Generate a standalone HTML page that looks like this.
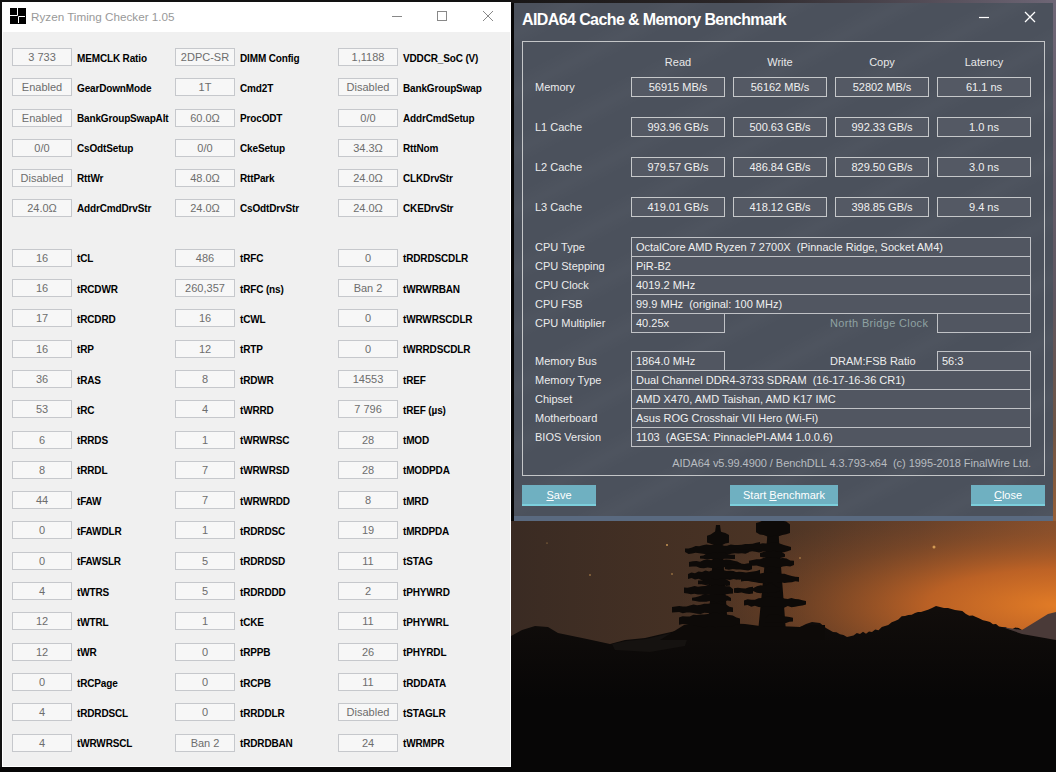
<!DOCTYPE html>
<html><head><meta charset="utf-8">
<style>
*{margin:0;padding:0;box-sizing:border-box}
html,body{width:1056px;height:772px;overflow:hidden;background:#070606;font-family:"Liberation Sans",sans-serif;position:relative}
.abs{position:absolute}
#desk{position:absolute;left:511px;top:0;width:545px;height:772px;overflow:hidden;background:#0a0808}
#rtc{position:absolute;left:0;top:0;width:511px;height:767px;background:#121212}
#rtcw{position:absolute;left:2px;top:2px;width:509px;height:765px;background:#fff}
#rtcb{position:absolute;left:3px;top:32px;width:507px;height:734px;background:#f0f0f0}
.tb{position:absolute;width:60px;height:18px;border:1px solid #c6c8cc;background:#f7f7f7;color:#6d6d6d;font-size:11px;line-height:16px;text-align:center;white-space:pre}
.lb{position:absolute;height:18px;color:#000;font-size:10px;letter-spacing:-0.15px;font-weight:bold;line-height:19px;white-space:pre}
#rtitle{position:absolute;left:31px;top:10px;font-size:11.7px;color:#999;white-space:pre}
#aida{position:absolute;left:514px;top:3px;width:539px;height:518px;background:#4b515c;overflow:hidden}
#aida .streak{position:absolute;left:-200px;top:-200px;width:1000px;height:1000px;background:repeating-linear-gradient(-28deg,rgba(255,255,255,0) 0px,rgba(255,255,255,0.02) 14px,rgba(255,255,255,0) 30px,rgba(255,255,255,0) 52px)}
#aida .strip{position:absolute;left:0;top:513px;width:539px;height:5px;background:#5a6a80}
#atitle{position:absolute;left:522px;top:11px;letter-spacing:-0.6px;font-size:16px;font-weight:bold;color:#fff;white-space:pre}
#panel{position:absolute;left:522px;top:41px;width:523px;height:435px;border:1px solid #c4c6c8}
.hd{position:absolute;width:94px;text-align:center;color:#e8e8e8;font-size:11px;white-space:pre}
.al{position:absolute;color:#ececec;font-size:11px;line-height:21px;white-space:pre}
.al.nb{color:#8fa2a2;letter-spacing:0.33px}
.vb{position:absolute;width:94px;height:20px;border:1px solid #c6c8ca;background:#545964;color:#f0f0f0;font-size:11px;line-height:19px;text-align:center;white-space:pre}
.ib{position:absolute;height:20px;border:1px solid #c0c2c6;background:#515661;color:#f0f0f0;font-size:11px;line-height:19px;padding-left:4px;white-space:pre}
.btn{position:absolute;top:485px;height:21px;background:#6fb0c1;border-bottom:2px solid #7ccfdc;color:#fff;font-size:11px;line-height:20px;text-align:center;white-space:pre}
.btn u{text-decoration:underline}
#foot{position:absolute;right:25px;top:457px;color:#b8bcc0;font-size:11px;letter-spacing:-0.05px;white-space:pre}
</style></head><body>
<div id="desk">
<svg width="545" height="772" viewBox="511 0 545 772" style="position:absolute;left:0;top:0">
<defs>
<linearGradient id="skyH" x1="511" y1="0" x2="1056" y2="0" gradientUnits="userSpaceOnUse">
<stop offset="0" stop-color="#3a2b23"/><stop offset="0.45" stop-color="#4a3324"/><stop offset="0.75" stop-color="#64402a"/><stop offset="1" stop-color="#86502e"/>
</linearGradient>
<radialGradient id="glow" cx="1060" cy="605" r="380" gradientUnits="userSpaceOnUse" gradientTransform="translate(1060 605) scale(1 0.27) translate(-1060 -605)">
<stop offset="0" stop-color="#e27c26" stop-opacity="1"/><stop offset="0.35" stop-color="#c86624" stop-opacity="0.85"/><stop offset="0.7" stop-color="#9a5224" stop-opacity="0.35"/><stop offset="1" stop-color="#7a4426" stop-opacity="0"/>
</radialGradient>
</defs>
<linearGradient id="gnd" x1="0" y1="610" x2="0" y2="700" gradientUnits="userSpaceOnUse"><stop offset="0" stop-color="#110d0b"/><stop offset="1" stop-color="#070606"/></linearGradient>
<rect x="511" y="0" width="545" height="772" fill="#070606"/>
<linearGradient id="rstrip" x1="0" y1="0" x2="0" y2="540" gradientUnits="userSpaceOnUse"><stop offset="0" stop-color="#6e6676"/><stop offset="0.55" stop-color="#5e5660"/><stop offset="0.8" stop-color="#6e5444"/><stop offset="1" stop-color="#a06234"/></linearGradient>
<linearGradient id="tstrip" x1="511" y1="0" x2="1056" y2="0" gradientUnits="userSpaceOnUse"><stop offset="0" stop-color="#181616"/><stop offset="0.4" stop-color="#2a2628"/><stop offset="1" stop-color="#6e6676"/></linearGradient>
<rect x="511" y="0" width="545" height="3" fill="url(#tstrip)"/>
<rect x="1053" y="0" width="3" height="540" fill="url(#rstrip)"/>
<rect x="511" y="521" width="545" height="134" fill="url(#skyH)"/>
<rect x="511" y="521" width="545" height="134" fill="url(#glow)"/>
<path d="M511.0 636.0L522.0 630.0L535.0 626.0L548.0 627.0L558.0 633.0L587.0 639.0L610.0 644.0L625.0 640.0L645.0 638.0L662.0 634.0L680.0 630.0L700.0 628.0L760.0 626.0L800.0 627.0L806.0 624.0L812.0 622.0L820.0 623.0L826.0 628.0L833.0 632.0L836.5 632.2L840.0 634.3L843.5 635.1L847.0 637.0L850.2 636.3L853.5 635.6L856.8 633.1L860.0 634.0L863.0 631.7L866.0 633.7L869.0 631.5L872.0 632.0L875.2 629.4L878.5 630.2L881.8 627.1L885.0 626.0L888.3 625.0L891.7 622.3L895.0 621.0L898.3 619.5L901.7 616.3L905.0 616.0L908.3 615.1L911.7 614.8L915.0 613.0L918.0 612.1L921.0 612.1L924.0 611.0L928.0 609.7L932.0 608.0L936.0 605.9L940.0 607.0L944.0 608.0L948.0 608.0L951.5 609.0L955.0 610.0L958.7 610.4L962.3 611.0L966.0 614.0L969.3 615.8L972.7 615.6L976.0 617.0L979.5 618.6L983.0 620.3L986.5 621.1L990.0 622.0L993.0 624.2L996.0 623.9L999.0 626.4L1002.0 627.0L1005.3 627.0L1008.7 629.0L1012.0 629.3L1015.3 627.5L1018.7 628.1L1022.0 630.0L1025.1 629.5L1028.2 632.4L1031.3 631.4L1034.4 632.6L1037.5 632.3L1040.5 633.5L1043.6 633.8L1046.7 634.3L1049.8 635.7L1052.9 636.3L1056.0 637.0V772H511Z" fill="url(#gnd)"/>
<path d="M1002 627L1022 630L1035 622L1048 614L1056 612V640L1022 634Z" fill="#4a3a38"/>
<path d="M612 644L626 641L646 639L663 635L680 631L690 630L685 646L650 652L615 650Z" fill="#151210"/>
<g fill="#0d0a08">
<path d="M716 525L720 525L722 540L728 630H708L714 540Z"/>
<path d="M768 521L778 521L779 540L786 632H758L767 540Z"/>
<path d="M684 625L700 622L745 624L760 626L800 627L807 625L825 625L825 640L660 640Z"/>
<path d="M707.0 535.7L710.7 534.4L714.3 531.9L718.0 530.2L721.7 532.1L725.3 532.9L729.0 535.0L729.0 542.8L725.3 543.4L721.7 545.3L718.0 545.3L714.3 545.0L710.7 543.7L707.0 542.4Z"/>
<path d="M685.0 548.6L688.6 548.5L692.1 547.4L695.7 546.0L699.2 546.2L702.8 545.2L706.3 544.5L709.9 544.9L713.4 544.7L717.0 544.5L720.6 544.5L724.1 545.8L727.7 545.8L731.2 545.3L734.8 545.7L738.3 547.0L741.9 547.7L745.4 548.5L749.0 547.3L749.0 552.3L745.4 553.8L741.9 553.3L738.3 553.6L734.8 553.2L731.2 553.7L727.7 554.8L724.1 555.4L720.6 554.2L717.0 554.9L713.4 554.8L709.9 555.1L706.3 554.3L702.8 553.7L699.2 553.2L695.7 552.8L692.1 553.6L688.6 554.0L685.0 552.0Z"/>
<path d="M700.0 556.1L703.5 555.5L707.0 553.2L710.5 553.8L714.0 552.1L717.5 553.2L721.0 552.0L724.5 552.5L728.0 554.4L731.5 554.7L735.0 554.8L735.0 559.0L731.5 558.9L728.0 558.7L724.5 558.7L721.0 559.2L717.5 560.1L714.0 559.3L710.5 559.1L707.0 559.5L703.5 558.8L700.0 558.6Z"/>
<path d="M689.0 561.9L692.7 561.3L696.4 560.9L700.1 561.8L703.9 560.1L707.6 559.5L711.3 560.3L715.0 558.6L718.7 558.7L722.4 560.0L726.1 559.6L729.9 559.8L733.6 560.7L737.3 561.6L741.0 563.4L741.0 566.4L737.3 566.8L733.6 567.4L729.9 567.6L726.1 566.9L722.4 567.5L718.7 567.4L715.0 568.8L711.3 568.1L707.6 567.5L703.9 568.2L700.1 567.9L696.4 566.6L692.7 566.6L689.0 566.7Z"/>
<path d="M688.0 573.9L691.5 572.6L695.0 573.3L698.5 571.6L702.0 572.0L705.5 570.5L709.0 571.4L712.5 570.2L716.0 569.2L719.5 569.6L723.0 569.9L726.5 570.9L730.0 570.7L733.5 571.0L737.0 572.5L740.5 573.2L744.0 574.5L744.0 577.8L740.5 578.3L737.0 579.7L733.5 578.9L730.0 580.1L726.5 579.5L723.0 580.6L719.5 580.5L716.0 580.9L712.5 579.3L709.0 580.1L705.5 580.6L702.0 580.3L698.5 578.7L695.0 579.5L691.5 578.0L688.0 578.9Z"/>
<path d="M698.0 580.5L701.6 580.6L705.1 579.5L708.7 579.6L712.2 578.7L715.8 579.4L719.3 578.9L722.9 578.7L726.4 579.4L730.0 581.7L730.0 585.5L726.4 585.9L722.9 584.7L719.3 585.8L715.8 585.9L712.2 586.3L708.7 584.8L705.1 585.0L701.6 584.2L698.0 584.2Z"/>
<path d="M684.0 587.4L687.5 587.7L691.0 586.9L694.5 586.0L698.0 586.7L701.5 586.3L705.0 586.0L708.5 584.8L712.0 585.5L715.5 584.4L719.0 585.2L722.5 585.4L726.0 586.2L729.5 586.3L733.0 589.1L733.0 593.5L729.5 593.7L726.0 594.2L722.5 594.2L719.0 594.7L715.5 595.1L712.0 595.2L708.5 594.8L705.0 595.0L701.5 594.5L698.0 594.6L694.5 593.7L691.0 594.3L687.5 593.5L684.0 593.0Z"/>
<path d="M692.0 597.8L695.5 597.3L699.1 596.2L702.6 595.1L706.2 594.6L709.7 595.0L713.3 595.1L716.8 594.6L720.4 594.3L723.9 595.1L727.5 595.8L731.0 598.1L731.0 600.9L727.5 600.5L723.9 601.8L720.4 600.8L716.8 602.4L713.3 601.6L709.7 601.1L706.2 601.7L702.6 601.8L699.1 601.7L695.5 601.0L692.0 600.4Z"/>
<path d="M672.0 607.1L675.6 606.5L679.2 605.9L682.8 606.6L686.4 606.4L689.9 605.5L693.5 604.4L697.1 605.3L700.7 604.8L704.3 603.8L707.9 603.8L711.5 603.2L715.1 603.8L718.6 603.2L722.2 605.0L725.8 604.2L729.4 606.7L733.0 607.6L733.0 611.9L729.4 611.7L725.8 612.2L722.2 613.4L718.6 614.2L715.1 613.6L711.5 613.4L707.9 613.1L704.3 612.8L700.7 614.1L697.1 613.8L693.5 613.0L689.9 612.5L686.4 612.5L682.8 613.2L679.2 612.1L675.6 612.3L672.0 612.5Z"/>
<path d="M679.0 617.4L682.6 616.2L686.2 616.4L689.8 616.5L693.4 614.7L696.9 615.1L700.5 614.6L704.1 614.5L707.7 613.9L711.3 613.2L714.9 612.0L718.5 613.2L722.1 612.8L725.6 614.3L729.2 614.9L732.8 615.4L736.4 617.4L740.0 618.5L740.0 624.7L736.4 624.3L732.8 626.2L729.2 626.8L725.6 626.8L722.1 626.8L718.5 626.7L714.9 627.2L711.3 626.6L707.7 626.4L704.1 627.6L700.5 626.8L696.9 626.1L693.4 625.1L689.8 625.0L686.2 624.3L682.6 624.1L679.0 624.8Z"/>
<path d="M756.0 523.1L759.8 522.0L763.6 519.9L767.3 519.4L771.1 518.5L774.9 518.3L778.7 519.5L782.4 520.7L786.2 521.5L790.0 524.6L790.0 533.1L786.2 534.3L782.4 535.1L778.7 536.2L774.9 535.7L771.1 536.3L767.3 536.4L763.6 535.1L759.8 534.5L756.0 532.2Z"/>
<path d="M745.0 546.3L748.5 545.2L752.1 545.6L755.6 543.6L759.2 543.9L762.7 543.3L766.2 543.5L769.8 543.1L773.3 542.2L776.8 542.4L780.4 543.7L783.9 545.1L787.5 546.1L791.0 547.0L791.0 550.0L787.5 551.3L783.9 552.2L780.4 552.6L776.8 551.8L773.3 553.1L769.8 552.0L766.2 551.7L762.7 551.5L759.2 552.6L755.6 551.8L752.1 551.3L748.5 551.9L745.0 551.3Z"/>
<path d="M760.0 552.9L763.6 551.9L767.1 551.5L770.7 551.2L774.3 550.4L777.9 552.0L781.4 551.8L785.0 554.2L785.0 556.7L781.4 557.8L777.9 558.2L774.3 557.4L770.7 557.8L767.1 557.6L763.6 557.6L760.0 556.7Z"/>
<path d="M749.0 560.8L752.8 560.0L756.5 559.3L760.2 559.3L764.0 557.7L767.8 557.4L771.5 557.3L775.2 557.3L779.0 558.6L782.8 558.0L786.5 558.4L790.2 560.4L794.0 560.7L794.0 565.0L790.2 566.5L786.5 566.1L782.8 566.6L779.0 567.7L775.2 566.9L771.5 566.3L767.8 567.0L764.0 567.4L760.2 566.6L756.5 565.4L752.8 565.8L749.0 564.7Z"/>
<path d="M741.0 576.2L744.6 576.9L748.2 576.1L751.9 574.5L755.5 574.9L759.1 573.8L762.8 573.0L766.4 572.6L770.0 572.6L773.6 573.1L777.2 573.1L780.9 573.8L784.5 573.7L788.1 575.1L791.8 576.0L795.4 576.7L799.0 577.1L799.0 581.8L795.4 581.2L791.8 582.3L788.1 582.4L784.5 582.9L780.9 582.3L777.2 582.9L773.6 583.0L770.0 582.5L766.4 583.1L762.8 583.3L759.1 583.0L755.5 582.2L751.9 581.8L748.2 581.1L744.6 581.0L741.0 581.5Z"/>
<path d="M753.0 588.3L756.9 586.3L760.7 585.3L764.6 585.8L768.4 584.1L772.3 583.8L776.1 586.2L780.0 588.1L780.0 590.8L776.1 592.3L772.3 592.1L768.4 593.3L764.6 592.0L760.7 593.2L756.9 592.7L753.0 591.1Z"/>
<path d="M744.0 600.5L747.6 599.2L751.3 599.8L754.9 599.7L758.6 598.3L762.2 597.9L765.9 596.9L769.5 596.4L773.2 597.1L776.8 597.3L780.5 597.0L784.1 598.5L787.8 599.0L791.4 597.9L795.1 599.1L798.7 599.3L802.4 600.2L806.0 600.9L806.0 604.4L802.4 605.5L798.7 605.9L795.1 606.7L791.4 607.3L787.8 605.9L784.1 607.7L780.5 606.4L776.8 606.4L773.2 607.1L769.5 606.3L765.9 606.2L762.2 607.2L758.6 607.1L754.9 605.7L751.3 606.8L747.6 605.1L744.0 605.6Z"/>
<path d="M765.0 617.9L768.5 614.9L772.0 614.6L775.5 613.9L779.0 615.0L782.5 616.2L786.0 616.5L789.5 617.0L793.0 617.7L793.0 621.5L789.5 621.7L786.0 622.9L782.5 623.0L779.0 621.9L775.5 622.3L772.0 622.7L768.5 622.4L765.0 622.1Z"/>
<path d="M727.0 546.0L730.7 544.4L734.3 545.0L738.0 544.9L741.7 544.7L745.3 544.1L749.0 544.0L752.7 543.7L756.3 542.8L760.0 542.0L760.0 549.3L756.3 549.4L752.7 548.6L749.0 549.1L745.3 549.7L741.7 549.7L738.0 548.8L734.3 549.3L730.7 549.3L727.0 549.0Z"/>
<path d="M725.0 565.1L728.9 564.0L732.7 564.4L736.6 564.1L740.4 563.6L744.3 564.1L748.1 563.3L752.0 563.5L752.0 569.2L748.1 570.4L744.3 570.0L740.4 569.4L736.6 569.5L732.7 568.9L728.9 569.8L725.0 569.0Z"/>
<path d="M725.0 573.7L728.5 572.7L732.0 572.0L735.5 572.2L739.0 571.7L742.5 571.9L746.0 572.4L749.5 572.1L753.0 571.5L756.5 570.9L760.0 569.7L760.0 580.7L756.5 580.3L753.0 578.9L749.5 579.8L746.0 579.5L742.5 579.2L739.0 579.7L735.5 578.1L732.0 578.0L728.5 578.2L725.0 578.5Z"/>
<path d="M734.0 588.2L737.8 587.8L741.6 588.2L745.4 588.4L749.2 587.3L753.0 586.7L753.0 593.5L749.2 593.9L745.4 593.4L741.6 592.5L737.8 593.0L734.0 592.7Z"/>
</g>
<g fill="#e8b060" opacity="0.8">
<circle cx="934" cy="547" r="1.5"/><circle cx="667" cy="545" r="1"/><circle cx="590" cy="575" r="0.8"/><circle cx="672" cy="574" r="0.8"/><circle cx="800" cy="558" r="0.8"/><circle cx="547" cy="543" r="0.6"/>
</g>
</svg>
</div>
<div id="rtc"><div id="rtcw"></div><div id="rtcb"></div></div>
<svg class="abs" style="left:10px;top:8px" width="16" height="16" viewBox="0 0 16 16"><rect width="16" height="16" fill="#000"/><path d="M0 7.5H7.5V0M8.5 15V8.5H15" stroke="#fff" stroke-width="1" fill="none"/></svg>
<div id="rtitle">Ryzen Timing Checker 1.05</div>
<svg class="abs" style="left:385px;top:4px" width="120" height="24"><path d="M7 12.5H17" stroke="#888" stroke-width="1"/><rect x="52.5" y="7.5" width="9" height="9" stroke="#888" fill="none"/><path d="M98 7L108 17M108 7L98 17" stroke="#888" stroke-width="1"/></svg>
<div class="tb" style="left:12px;top:48px">3 733</div><div class="lb" style="left:77px;top:49px">MEMCLK Ratio</div>
<div class="tb" style="left:175px;top:48px">2DPC-SR</div><div class="lb" style="left:240px;top:49px">DIMM Config</div>
<div class="tb" style="left:338px;top:48px">1,1188</div><div class="lb" style="left:403px;top:49px">VDDCR_SoC (V)</div>
<div class="tb" style="left:12px;top:78px">Enabled</div><div class="lb" style="left:77px;top:79px">GearDownMode</div>
<div class="tb" style="left:175px;top:78px">1T</div><div class="lb" style="left:240px;top:79px">Cmd2T</div>
<div class="tb" style="left:338px;top:78px">Disabled</div><div class="lb" style="left:403px;top:79px">BankGroupSwap</div>
<div class="tb" style="left:12px;top:109px">Enabled</div><div class="lb" style="left:77px;top:109px">BankGroupSwapAlt</div>
<div class="tb" style="left:175px;top:109px">60.0Ω</div><div class="lb" style="left:240px;top:109px">ProcODT</div>
<div class="tb" style="left:338px;top:109px">0/0</div><div class="lb" style="left:403px;top:109px">AddrCmdSetup</div>
<div class="tb" style="left:12px;top:139px">0/0</div><div class="lb" style="left:77px;top:139px">CsOdtSetup</div>
<div class="tb" style="left:175px;top:139px">0/0</div><div class="lb" style="left:240px;top:139px">CkeSetup</div>
<div class="tb" style="left:338px;top:139px">34.3Ω</div><div class="lb" style="left:403px;top:139px">RttNom</div>
<div class="tb" style="left:12px;top:169px">Disabled</div><div class="lb" style="left:77px;top:169px">RttWr</div>
<div class="tb" style="left:175px;top:169px">48.0Ω</div><div class="lb" style="left:240px;top:169px">RttPark</div>
<div class="tb" style="left:338px;top:169px">24.0Ω</div><div class="lb" style="left:403px;top:169px">CLKDrvStr</div>
<div class="tb" style="left:12px;top:199px">24.0Ω</div><div class="lb" style="left:77px;top:199px">AddrCmdDrvStr</div>
<div class="tb" style="left:175px;top:199px">24.0Ω</div><div class="lb" style="left:240px;top:199px">CsOdtDrvStr</div>
<div class="tb" style="left:338px;top:199px">24.0Ω</div><div class="lb" style="left:403px;top:199px">CKEDrvStr</div>
<div class="tb" style="left:12px;top:249px">16</div><div class="lb" style="left:77px;top:249px">tCL</div>
<div class="tb" style="left:175px;top:249px">486</div><div class="lb" style="left:240px;top:249px">tRFC</div>
<div class="tb" style="left:338px;top:249px">0</div><div class="lb" style="left:403px;top:249px">tRDRDSCDLR</div>
<div class="tb" style="left:12px;top:279px">16</div><div class="lb" style="left:77px;top:280px">tRCDWR</div>
<div class="tb" style="left:175px;top:279px">260,357</div><div class="lb" style="left:240px;top:280px">tRFC (ns)</div>
<div class="tb" style="left:338px;top:279px">Ban 2</div><div class="lb" style="left:403px;top:280px">tWRWRBAN</div>
<div class="tb" style="left:12px;top:309px">17</div><div class="lb" style="left:77px;top:310px">tRCDRD</div>
<div class="tb" style="left:175px;top:309px">16</div><div class="lb" style="left:240px;top:310px">tCWL</div>
<div class="tb" style="left:338px;top:309px">0</div><div class="lb" style="left:403px;top:310px">tWRWRSCDLR</div>
<div class="tb" style="left:12px;top:340px">16</div><div class="lb" style="left:77px;top:340px">tRP</div>
<div class="tb" style="left:175px;top:340px">12</div><div class="lb" style="left:240px;top:340px">tRTP</div>
<div class="tb" style="left:338px;top:340px">0</div><div class="lb" style="left:403px;top:340px">tWRRDSCDLR</div>
<div class="tb" style="left:12px;top:370px">36</div><div class="lb" style="left:77px;top:371px">tRAS</div>
<div class="tb" style="left:175px;top:370px">8</div><div class="lb" style="left:240px;top:371px">tRDWR</div>
<div class="tb" style="left:338px;top:370px">14553</div><div class="lb" style="left:403px;top:371px">tREF</div>
<div class="tb" style="left:12px;top:400px">53</div><div class="lb" style="left:77px;top:401px">tRC</div>
<div class="tb" style="left:175px;top:400px">4</div><div class="lb" style="left:240px;top:401px">tWRRD</div>
<div class="tb" style="left:338px;top:400px">7 796</div><div class="lb" style="left:403px;top:401px">tREF (µs)</div>
<div class="tb" style="left:12px;top:431px">6</div><div class="lb" style="left:77px;top:431px">tRRDS</div>
<div class="tb" style="left:175px;top:431px">1</div><div class="lb" style="left:240px;top:431px">tWRWRSC</div>
<div class="tb" style="left:338px;top:431px">28</div><div class="lb" style="left:403px;top:431px">tMOD</div>
<div class="tb" style="left:12px;top:461px">8</div><div class="lb" style="left:77px;top:461px">tRRDL</div>
<div class="tb" style="left:175px;top:461px">7</div><div class="lb" style="left:240px;top:461px">tWRWRSD</div>
<div class="tb" style="left:338px;top:461px">28</div><div class="lb" style="left:403px;top:461px">tMODPDA</div>
<div class="tb" style="left:12px;top:491px">44</div><div class="lb" style="left:77px;top:492px">tFAW</div>
<div class="tb" style="left:175px;top:491px">7</div><div class="lb" style="left:240px;top:492px">tWRWRDD</div>
<div class="tb" style="left:338px;top:491px">8</div><div class="lb" style="left:403px;top:492px">tMRD</div>
<div class="tb" style="left:12px;top:521px">0</div><div class="lb" style="left:77px;top:522px">tFAWDLR</div>
<div class="tb" style="left:175px;top:521px">1</div><div class="lb" style="left:240px;top:522px">tRDRDSC</div>
<div class="tb" style="left:338px;top:521px">19</div><div class="lb" style="left:403px;top:522px">tMRDPDA</div>
<div class="tb" style="left:12px;top:552px">0</div><div class="lb" style="left:77px;top:552px">tFAWSLR</div>
<div class="tb" style="left:175px;top:552px">5</div><div class="lb" style="left:240px;top:552px">tRDRDSD</div>
<div class="tb" style="left:338px;top:552px">11</div><div class="lb" style="left:403px;top:552px">tSTAG</div>
<div class="tb" style="left:12px;top:582px">4</div><div class="lb" style="left:77px;top:583px">tWTRS</div>
<div class="tb" style="left:175px;top:582px">5</div><div class="lb" style="left:240px;top:583px">tRDRDDD</div>
<div class="tb" style="left:338px;top:582px">2</div><div class="lb" style="left:403px;top:583px">tPHYWRD</div>
<div class="tb" style="left:12px;top:612px">12</div><div class="lb" style="left:77px;top:613px">tWTRL</div>
<div class="tb" style="left:175px;top:612px">1</div><div class="lb" style="left:240px;top:613px">tCKE</div>
<div class="tb" style="left:338px;top:612px">11</div><div class="lb" style="left:403px;top:613px">tPHYWRL</div>
<div class="tb" style="left:12px;top:643px">12</div><div class="lb" style="left:77px;top:643px">tWR</div>
<div class="tb" style="left:175px;top:643px">0</div><div class="lb" style="left:240px;top:643px">tRPPB</div>
<div class="tb" style="left:338px;top:643px">26</div><div class="lb" style="left:403px;top:643px">tPHYRDL</div>
<div class="tb" style="left:12px;top:673px">0</div><div class="lb" style="left:77px;top:674px">tRCPage</div>
<div class="tb" style="left:175px;top:673px">0</div><div class="lb" style="left:240px;top:674px">tRCPB</div>
<div class="tb" style="left:338px;top:673px">11</div><div class="lb" style="left:403px;top:674px">tRDDATA</div>
<div class="tb" style="left:12px;top:703px">4</div><div class="lb" style="left:77px;top:704px">tRDRDSCL</div>
<div class="tb" style="left:175px;top:703px">0</div><div class="lb" style="left:240px;top:704px">tRRDDLR</div>
<div class="tb" style="left:338px;top:703px">Disabled</div><div class="lb" style="left:403px;top:704px">tSTAGLR</div>
<div class="tb" style="left:12px;top:734px">4</div><div class="lb" style="left:77px;top:734px">tWRWRSCL</div>
<div class="tb" style="left:175px;top:734px">Ban 2</div><div class="lb" style="left:240px;top:734px">tRDRDBAN</div>
<div class="tb" style="left:338px;top:734px">24</div><div class="lb" style="left:403px;top:734px">tWRMPR</div>
<div id="aida"><div class="streak"></div><div class="strip"></div></div>
<div id="atitle">AIDA64 Cache &amp; Memory Benchmark</div>
<svg class="abs" style="left:970px;top:4px" width="80" height="28"><path d="M9 13.5H19" stroke="#fff" stroke-width="1.2"/><path d="M55 8L65 18M65 8L55 18" stroke="#fff" stroke-width="1.3"/></svg>
<div id="panel"></div>
<div class="hd" style="left:631px;top:56px">Read</div>
<div class="hd" style="left:733px;top:56px">Write</div>
<div class="hd" style="left:835px;top:56px">Copy</div>
<div class="hd" style="left:937px;top:56px">Latency</div>
<div class="al" style="left:535px;top:77px">Memory</div>
<div class="vb" style="left:631px;top:77px">56915 MB/s</div>
<div class="vb" style="left:733px;top:77px">56162 MB/s</div>
<div class="vb" style="left:835px;top:77px">52802 MB/s</div>
<div class="vb" style="left:937px;top:77px">61.1 ns</div>
<div class="al" style="left:535px;top:117px">L1 Cache</div>
<div class="vb" style="left:631px;top:117px">993.96 GB/s</div>
<div class="vb" style="left:733px;top:117px">500.63 GB/s</div>
<div class="vb" style="left:835px;top:117px">992.33 GB/s</div>
<div class="vb" style="left:937px;top:117px">1.0 ns</div>
<div class="al" style="left:535px;top:157px">L2 Cache</div>
<div class="vb" style="left:631px;top:157px">979.57 GB/s</div>
<div class="vb" style="left:733px;top:157px">486.84 GB/s</div>
<div class="vb" style="left:835px;top:157px">829.50 GB/s</div>
<div class="vb" style="left:937px;top:157px">3.0 ns</div>
<div class="al" style="left:535px;top:197px">L3 Cache</div>
<div class="vb" style="left:631px;top:197px">419.01 GB/s</div>
<div class="vb" style="left:733px;top:197px">418.12 GB/s</div>
<div class="vb" style="left:835px;top:197px">398.85 GB/s</div>
<div class="vb" style="left:937px;top:197px">9.4 ns</div>
<div class="al" style="left:535px;top:237px">CPU Type</div>
<div class="ib" style="left:631px;top:237px;width:400px">OctalCore AMD Ryzen 7 2700X&nbsp; (Pinnacle Ridge, Socket AM4)</div>
<div class="al" style="left:535px;top:256px">CPU Stepping</div>
<div class="ib" style="left:631px;top:256px;width:400px">PiR-B2</div>
<div class="al" style="left:535px;top:275px">CPU Clock</div>
<div class="ib" style="left:631px;top:275px;width:400px">4019.2 MHz</div>
<div class="al" style="left:535px;top:294px">CPU FSB</div>
<div class="ib" style="left:631px;top:294px;width:400px">99.9 MHz&nbsp; (original: 100 MHz)</div>
<div class="al" style="left:535px;top:313px">CPU Multiplier</div>
<div class="ib" style="left:631px;top:313px;width:94px">40.25x</div>
<div class="al nb" style="left:830px;top:313px">North Bridge Clock</div>
<div class="ib" style="left:937px;top:313px;width:94px"></div>
<div class="al" style="left:535px;top:351px">Memory Bus</div>
<div class="ib" style="left:631px;top:351px;width:94px">1864.0 MHz</div>
<div class="al" style="left:535px;top:370px">Memory Type</div>
<div class="ib" style="left:631px;top:370px;width:400px">Dual Channel DDR4-3733 SDRAM&nbsp; (16-17-16-36 CR1)</div>
<div class="al" style="left:535px;top:389px">Chipset</div>
<div class="ib" style="left:631px;top:389px;width:400px">AMD X470, AMD Taishan, AMD K17 IMC</div>
<div class="al" style="left:535px;top:408px">Motherboard</div>
<div class="ib" style="left:631px;top:408px;width:400px">Asus ROG Crosshair VII Hero (Wi-Fi)</div>
<div class="al" style="left:535px;top:427px">BIOS Version</div>
<div class="ib" style="left:631px;top:427px;width:400px">1103&nbsp; (AGESA: PinnaclePI-AM4 1.0.0.6)</div>
<div class="al" style="left:830px;top:351px">DRAM:FSB Ratio</div>
<div class="ib" style="left:937px;top:351px;width:94px">56:3</div>
<div id="foot">AIDA64 v5.99.4900 / BenchDLL 4.3.793-x64&nbsp; (c) 1995-2018 FinalWire Ltd.</div>
<div class="btn" style="left:522px;width:74px"><u>S</u>ave</div>
<div class="btn" style="left:730px;width:108px">Start <u>B</u>enchmark</div>
<div class="btn" style="left:971px;width:74px"><u>C</u>lose</div>
</body></html>
